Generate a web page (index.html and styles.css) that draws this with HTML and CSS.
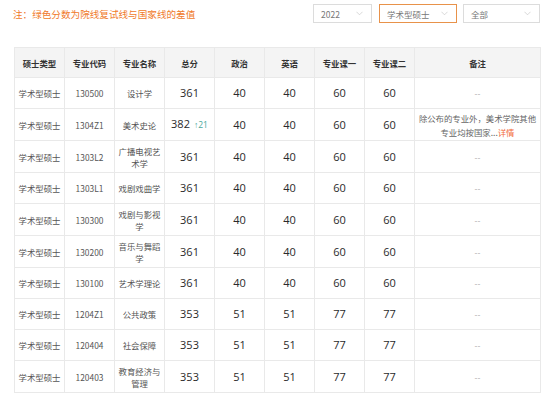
FILE: index.html
```html
<!DOCTYPE html>
<html lang="zh">
<head>
<meta charset="utf-8">
<link rel="stylesheet" href="styles.css">
</head>
<body>
<div class="topbar">
  <div class="note">注：绿色分数为院线复试线与国家线的差值</div>
  <div class="filters">
    <div class="select w1"><span>2022</span><svg class="chev" viewBox="0 0 8 5"><path d="M0.5 0.5 L4 4 L7.5 0.5" /></svg></div>
    <div class="select w2 active"><span>学术型硕士</span><svg class="chev" viewBox="0 0 8 5"><path d="M0.5 0.5 L4 4 L7.5 0.5" /></svg></div>
    <div class="select w3"><span>全部</span><svg class="chev" viewBox="0 0 8 5"><path d="M0.5 0.5 L4 4 L7.5 0.5" /></svg></div>
  </div>
</div>
<table class="scores">
  <colgroup>
    <col class="c"><col class="c"><col class="c"><col class="c"><col class="c"><col class="c"><col class="c"><col class="c"><col class="cr">
  </colgroup>
  <thead>
    <tr><th>硕士类型</th><th>专业代码</th><th>专业名称</th><th>总分</th><th>政治</th><th>英语</th><th>专业课一</th><th>专业课二</th><th>备注</th></tr>
  </thead>
  <tbody>
    <tr><td>学术型硕士</td><td>130500</td><td>设计学</td><td class="num">361</td><td class="num">40</td><td class="num">40</td><td class="num">60</td><td class="num">60</td><td class="rm">--</td></tr>
    <tr class="tall"><td>学术型硕士</td><td>1304Z1</td><td>美术史论</td><td class="num">382<span class="diff">↑21</span></td><td class="num">40</td><td class="num">40</td><td class="num">60</td><td class="num">60</td><td class="remark">除公布的专业外，美术学院其他专业均按国家...<a class="more">详情</a></td></tr>
    <tr class="tall"><td>学术型硕士</td><td>1303L2</td><td>广播电视艺术学</td><td class="num">361</td><td class="num">40</td><td class="num">40</td><td class="num">60</td><td class="num">60</td><td class="rm">--</td></tr>
    <tr><td>学术型硕士</td><td>1303L1</td><td>戏剧戏曲学</td><td class="num">361</td><td class="num">40</td><td class="num">40</td><td class="num">60</td><td class="num">60</td><td class="rm">--</td></tr>
    <tr class="tall"><td>学术型硕士</td><td>130300</td><td>戏剧与影视学</td><td class="num">361</td><td class="num">40</td><td class="num">40</td><td class="num">60</td><td class="num">60</td><td class="rm">--</td></tr>
    <tr class="tall"><td>学术型硕士</td><td>130200</td><td>音乐与舞蹈学</td><td class="num">361</td><td class="num">40</td><td class="num">40</td><td class="num">60</td><td class="num">60</td><td class="rm">--</td></tr>
    <tr><td>学术型硕士</td><td>130100</td><td>艺术学理论</td><td class="num">361</td><td class="num">40</td><td class="num">40</td><td class="num">60</td><td class="num">60</td><td class="rm">--</td></tr>
    <tr><td>学术型硕士</td><td>1204Z1</td><td>公共政策</td><td class="num">353</td><td class="num">51</td><td class="num">51</td><td class="num">77</td><td class="num">77</td><td class="rm">--</td></tr>
    <tr><td>学术型硕士</td><td>120404</td><td>社会保障</td><td class="num">353</td><td class="num">51</td><td class="num">51</td><td class="num">77</td><td class="num">77</td><td class="rm">--</td></tr>
    <tr class="tall"><td>学术型硕士</td><td>120403</td><td>教育经济与管理</td><td class="num">353</td><td class="num">51</td><td class="num">51</td><td class="num">77</td><td class="num">77</td><td class="rm">--</td></tr>
  </tbody>
</table>
</body>
</html>
```

FILE: styles.css
```css
* { box-sizing: border-box; }
html, body { background: #fff; }
body {
  margin: 0;
  font-family: "Noto Sans CJK SC", "Noto Sans", sans-serif;
  color: #555;
}
.topbar {
  display: flex;
  align-items: center;
  justify-content: space-between;
  height: 27px;
  padding: 0 7px 0 13px;
}
.note {
  font-size: 9.6px;
  color: #f07a2a;
  line-height: 12px;
}
.filters {
  display: flex;
  gap: 6px;
}
.select {
  height: 19px;
  border: 1px solid #dcdcdc;
  display: flex;
  align-items: center;
  justify-content: space-between;
  padding: 0 8px 0 7px;
  font-size: 8.5px;
  color: #777;
  background: #fff;
}
.select.w1 { width: 59px; margin-right: 1px; }
.select.w2 { width: 78px; }
.select.w3 { width: 77px; }
.select.active { border-color: #e8924a; }
.chev {
  width: 7px;
  height: 5px;
  fill: none;
  stroke: #c8c8c8;
  stroke-width: 0.8;
}
.scores {
  margin: 20px 0 0 14px;
  border-collapse: collapse;
  table-layout: fixed;
  width: 526px;
  font-size: 8.4px;
}
.scores col.c { width: 50px; }
.scores col.cr { width: 126px; }
.scores th, .scores td {
  border: 1px solid #e9e9e9;
  text-align: center;
  vertical-align: middle;
  padding: 0 2px;
  line-height: 12px;
}
.scores th {
  background: #f4f4f4;
  font-weight: bold;
  color: #333;
  height: 30px;
}
.scores tbody tr { height: 31px; }
.scores tbody tr.tall { height: 32px; }
.scores td.num {
  font-family: "Open Sans", "Liberation Sans", sans-serif;
  font-size: 11px;
  color: #2a2a2a;
}
.diff {
  font-family: "Open Sans", "Liberation Sans", sans-serif;
  font-size: 8.5px;
  color: #4aa89c;
  margin-left: 4px;
}
.scores td.rm { color: #aaa; }
.scores td.remark {
  line-height: 14px;
  color: #666;
  padding: 0 1px;
}
.more { color: #f26b3a; }
```
